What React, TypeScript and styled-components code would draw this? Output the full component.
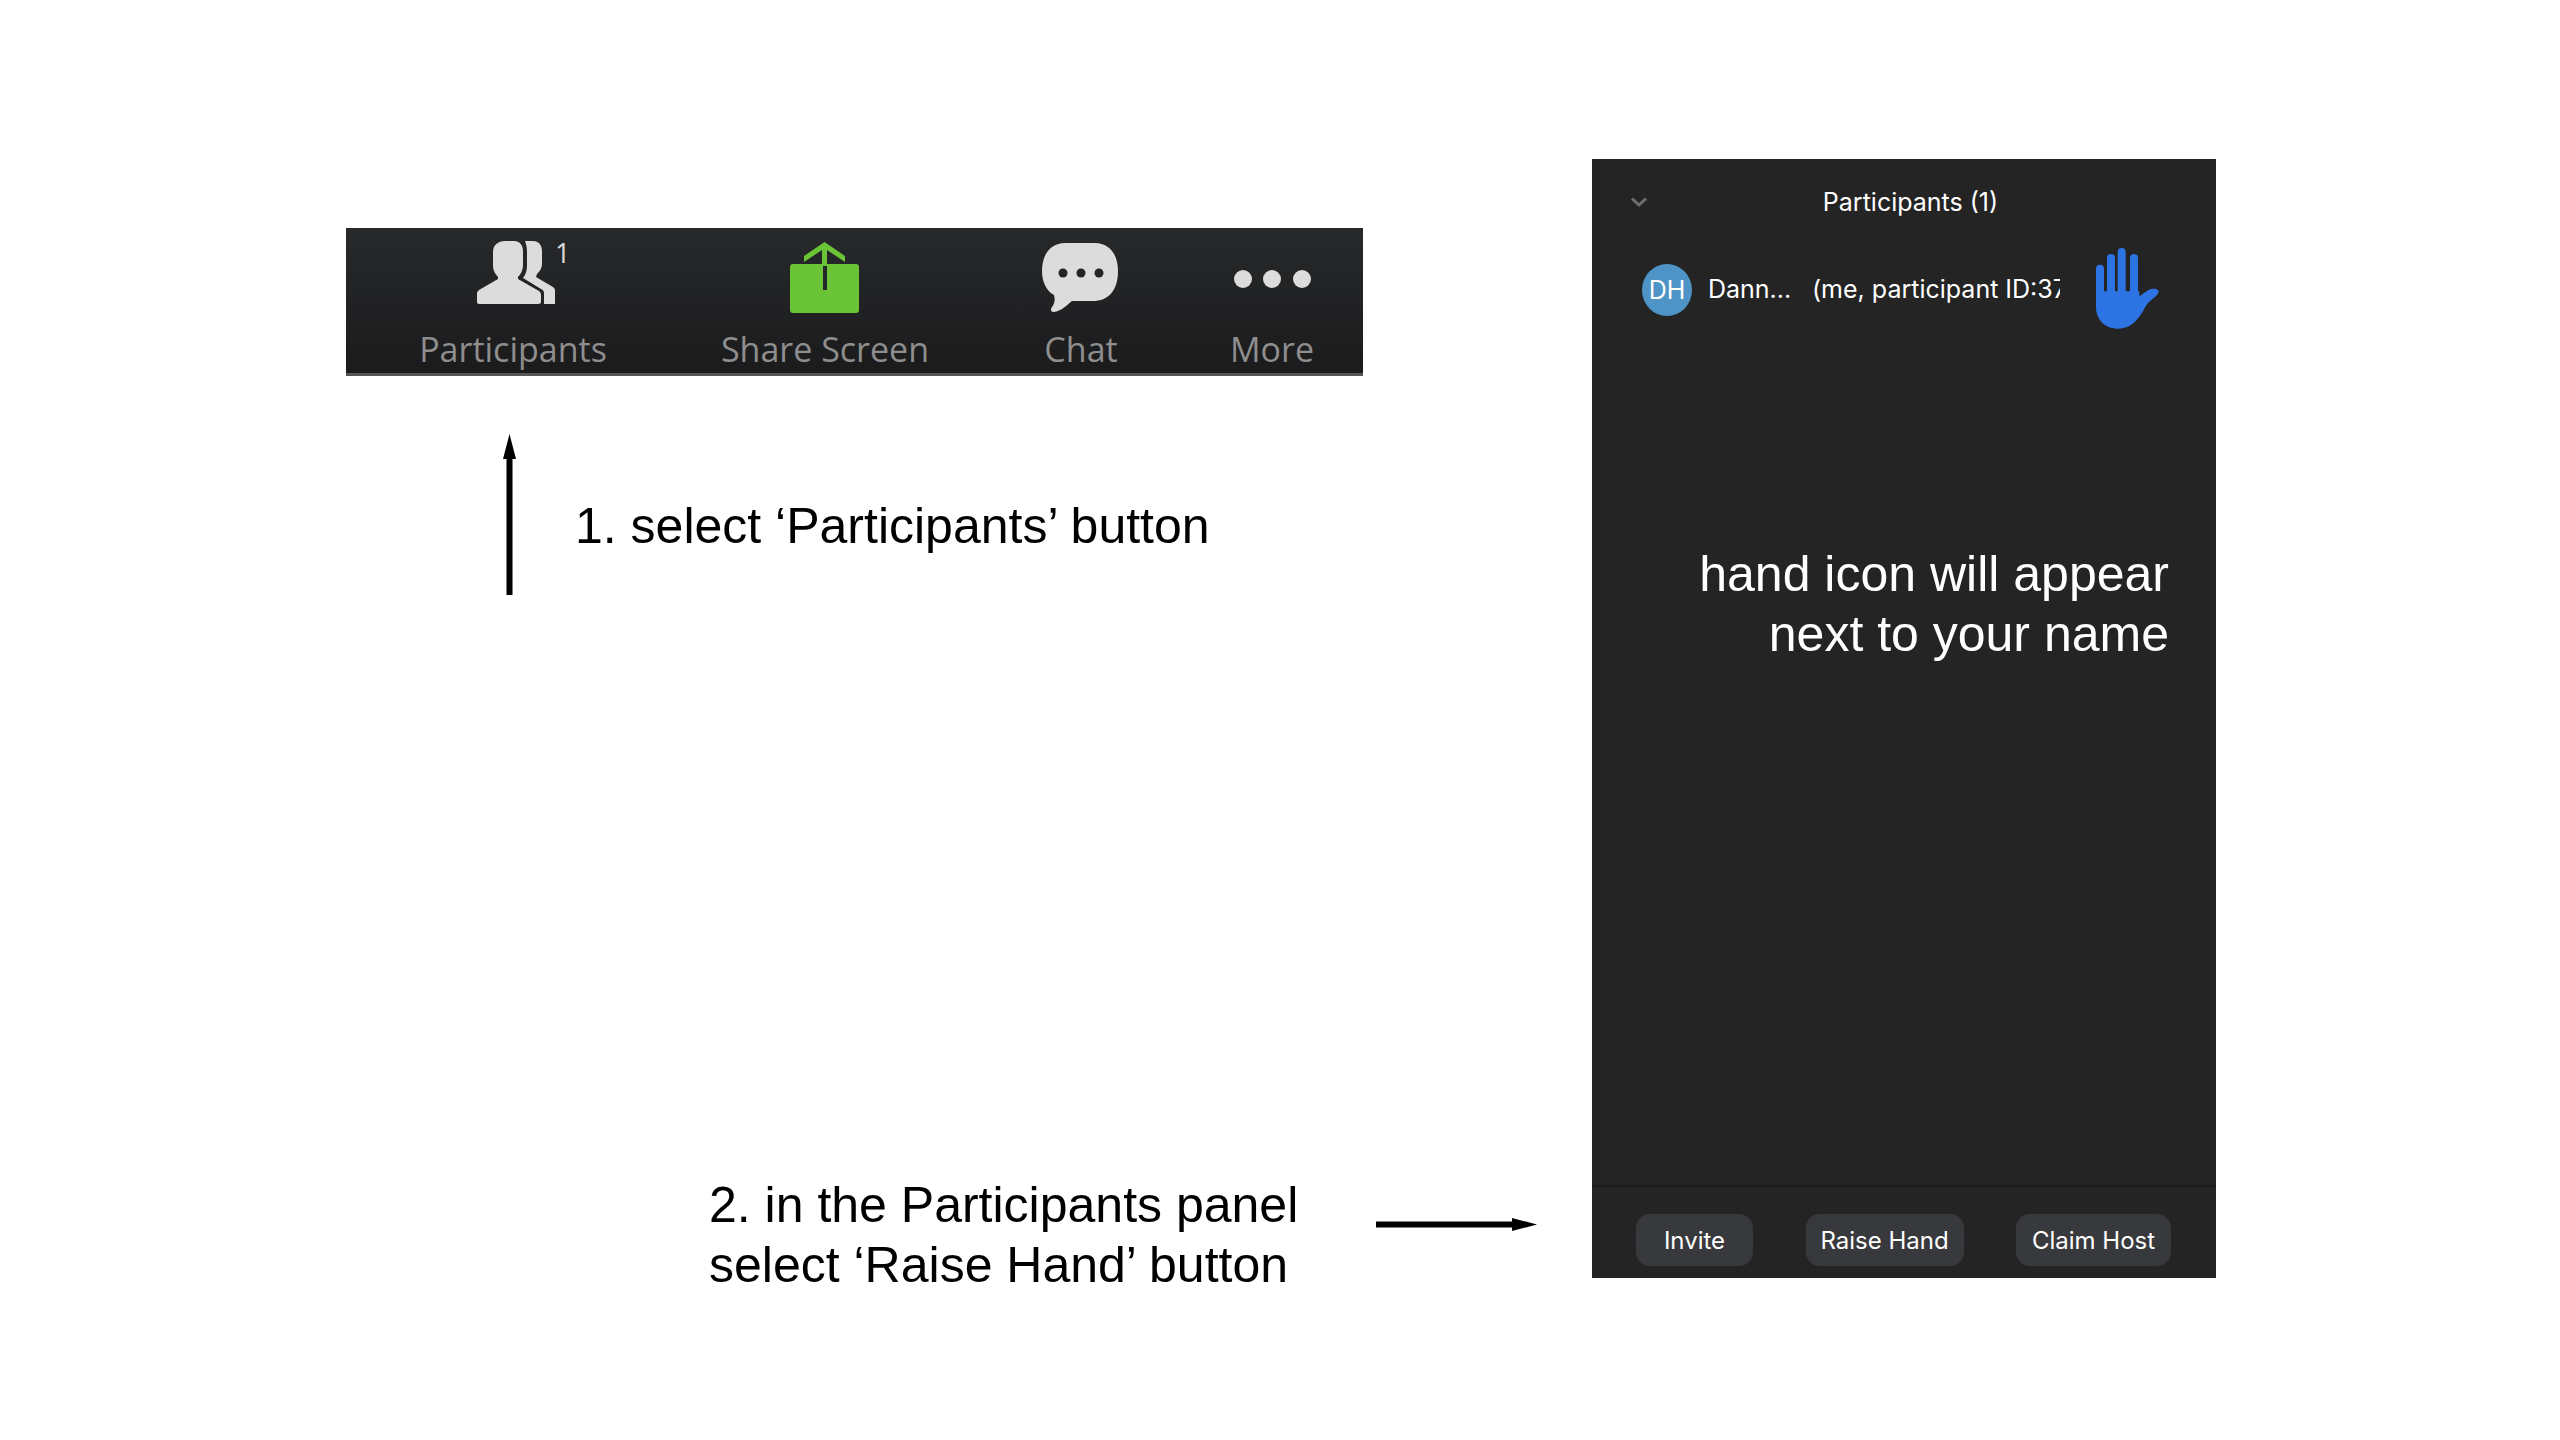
import styled, { createGlobalStyle } from 'styled-components'

const GlobalStyle = createGlobalStyle`
  html,
  body {
    background: #fff;
    margin: 0;
  }
`

const Page = styled.div`
  box-sizing: border-box;
  color: #000;
  display: flex;
  font-family: 'Liberation Sans', Arial, sans-serif;
  height: 1440px;
  overflow: hidden;
  padding: 159px 0 0 346px;
  width: 2560px;
`

const LeftColumn = styled.div`
  align-self: flex-start;
  display: flex;
  flex-direction: column;
  flex-shrink: 0;
  padding-top: 69px;
  width: 1246px;
`

const Toolbar = styled.div`
  background: linear-gradient(#27292b, #1b1b1c);
  border-bottom: 3px solid #55565a;
  box-sizing: border-box;
  display: grid;
  grid-template-columns: 334px 290px 222px 160px;
  height: 148px;
  padding-top: 12px;
  width: 1017px;
`

const ToolItem = styled.div`
  align-items: center;
  display: flex;
  flex-direction: column;
`

const ToolIcon = styled.div`
  height: 76px;
  position: relative;
  width: 100px;

  svg {
    display: block;
  }
`

const Badge = styled.span`
  color: #dcdcdc;
  font-family: 'Open Sans', sans-serif;
  font-size: 27px;
  left: 92px;
  line-height: 1;
  position: absolute;
  top: -1px;
`

const ToolLabel = styled.div`
  color: #8e8e8e;
  font-family: 'Open Sans', sans-serif;
  font-size: 34px;
  line-height: 40px;
  margin-top: 13px;
  white-space: nowrap;
`

const StepOne = styled.div`
  align-items: flex-start;
  column-gap: 59px;
  display: flex;
  margin-top: 58px;
  padding-left: 157px;
`

const StepTwo = styled.div`
  align-items: center;
  display: flex;
  margin-top: 580px;
  padding-left: 363px;
`

const StepText = styled.div<{ $top?: number; $width?: number }>`
  flex-shrink: 0;
  font-size: 50px;
  line-height: 60px;
  padding-top: ${({ $top }) => $top ?? 0}px;
  white-space: nowrap;
  width: ${({ $width }) => ($width ? `${$width}px` : 'auto')};
`

const ArrowSvg = styled.svg<{ $bottom?: number }>`
  display: block;
  flex-shrink: 0;
  margin-bottom: ${({ $bottom }) => $bottom ?? 0}px;
`

const Panel = styled.div`
  background: #242424;
  color: #fff;
  display: flex;
  flex-direction: column;
  flex-shrink: 0;
  font-family: Inter, sans-serif;
  height: 1119px;
  overflow: hidden;
  width: 1624px;
  max-width: 624px;
`

const PanelHeader = styled.div`
  align-items: center;
  display: grid;
  flex-shrink: 0;
  grid-template-columns: 90px 1fr 90px;
  height: 86px;
  padding-left: 0;
`

const Chevron = styled.svg`
  display: block;
  margin-left: 38px;
`

const PanelTitle = styled.div`
  font-size: 25px;
  padding-left: 13px;
  text-align: center;
`

const ParticipantRow = styled.div`
  align-items: center;
  display: flex;
  flex-shrink: 0;
  height: 86px;
  padding-left: 50px;
`

const Avatar = styled.div`
  align-items: center;
  background: #4f94c6;
  border-radius: 50%;
  display: flex;
  flex-shrink: 0;
  font-size: 25px;
  height: 52px;
  justify-content: center;
  margin-top: 4px;
  width: 50px;
`

const Name = styled.div`
  flex-shrink: 0;
  font-size: 25px;
  margin-left: 16px;
  margin-top: 2px;
  width: 104px;
`

const Note = styled.div`
  flex-shrink: 0;
  font-size: 25px;
  margin-top: 2px;
  overflow: hidden;
  white-space: nowrap;
  width: 248px;
`

const Hand = styled.svg`
  display: block;
  flex-shrink: 0;
  margin-left: 34px;
`

const Callout = styled.div`
  align-items: flex-end;
  display: flex;
  flex-direction: column;
  padding: 40px 47px 0 0;
`

const CalloutArrow = styled(ArrowSvg)`
  margin-right: 46px;
`

const CalloutText = styled.div`
  font-family: 'Liberation Sans', Arial, sans-serif;
  font-size: 50px;
  line-height: 60px;
  margin-top: 23px;
  text-align: right;
  white-space: nowrap;
`

const PanelFooter = styled.div`
  border-top: 2px solid #1a1a1a;
  box-sizing: border-box;
  display: flex;
  height: 93px;
  justify-content: space-between;
  margin-top: auto;
  padding: 27px 45px 0 44px;
`

const FooterButton = styled.div<{ $width: number }>`
  align-items: center;
  background: #38393d;
  border-radius: 14px;
  display: flex;
  font-size: 24px;
  height: 52px;
  justify-content: center;
  width: ${({ $width }) => $width}px;
`

const ParticipantsIcon = () => (
  <svg width="100" height="76" viewBox="0 0 100 76">
    <path
      fill="#dcdcdc"
      d="M62 1h8c6 0 9 4 9 11v12c0 4-2 7-5 10l-1 3 17 10c1 1 2 2 2 3v14H81V53c0-2-1-3-3-4L60 38c3-4 4-8 4-13V12c0-5-1-8-2-11z"
    />
    <path
      fill="#dcdcdc"
      d="M42 1h9c6 0 9 4 9 11v13c0 5-2 9-5 12v2l21 12c1 1 2 2 2 4v7c0 1-1 2-3 2H16c-1 0-2-1-2-2v-9c0-1 1-2 2-3l19-11v-2c-3-3-5-7-5-11V12c0-7 5-11 12-11z"
    />
  </svg>
)

const ShareIcon = () => (
  <svg width="100" height="76" viewBox="0 0 100 76">
    <rect x="15" y="24" width="69" height="49" rx="3" fill="#6bc436" />
    <path fill="#6bc436" d="M49.5 2 70 16v6L52 10v16h-5V10L29 22v-6z" />
    <rect x="48" y="26" width="4" height="24" fill="#23282a" />
  </svg>
)

const ChatIcon = () => (
  <svg width="100" height="76" viewBox="0 0 100 76">
    <path
      fill="#dcdcdc"
      d="M34 3h30c14 0 23 11 23 28 0 20-10 30-25 30H41c-6 5-11 10-18 11-3 0-4-2-2-5 3-4 3-8 2-12C15 51 11 41 11 31 11 14 20 3 34 3z"
    />
    <circle cx="32" cy="33" r="4.5" fill="#232426" />
    <circle cx="50" cy="33" r="4.5" fill="#232426" />
    <circle cx="68" cy="33" r="4.5" fill="#232426" />
  </svg>
)

const MoreIcon = () => (
  <svg width="100" height="76" viewBox="0 0 100 76">
    <circle cx="21" cy="39" r="9" fill="#dcdcdc" />
    <circle cx="50" cy="39" r="9" fill="#dcdcdc" />
    <circle cx="80" cy="39" r="9" fill="#dcdcdc" />
  </svg>
)

const UpArrow = ({ color, className }: { color: string; className?: string }) => (
  <ArrowSvg className={className} width="13" height="161" viewBox="0 0 13 161">
    <path fill={color} d="M6.5 0 13 25H9.5v136h-6V25H0z" />
  </ArrowSvg>
)

const tools = [
  { label: 'Participants', icon: <ParticipantsIcon />, badge: '1' },
  { label: 'Share Screen', icon: <ShareIcon /> },
  { label: 'Chat', icon: <ChatIcon /> },
  { label: 'More', icon: <MoreIcon /> },
]

const App = () => (
  <>
    <GlobalStyle />
    <Page>
      <LeftColumn>
        <Toolbar>
          {tools.map(({ label, icon, badge }) => (
            <ToolItem key={label}>
              <ToolIcon>
                {icon}
                {badge && <Badge>{badge}</Badge>}
              </ToolIcon>
              <ToolLabel>{label}</ToolLabel>
            </ToolItem>
          ))}
        </Toolbar>
        <StepOne>
          <UpArrow color="#000" />
          <StepText $top={62}>1. select ‘Participants’ button</StepText>
        </StepOne>
        <StepTwo>
          <StepText $width={667}>
            2. in the Participants panel
            <br />
            select ‘Raise Hand’ button
          </StepText>
          <ArrowSvg $bottom={22} width="161" height="13" viewBox="0 0 161 13">
            <path fill="#000" d="M161 6.5 136 13V9.5H0v-6h136V0z" />
          </ArrowSvg>
        </StepTwo>
      </LeftColumn>
      <Panel>
        <PanelHeader>
          <Chevron width="18" height="12" viewBox="0 0 18 12">
            <path d="M2 2.5 9 9l7-6.500" fill="none" stroke="#6f6f6f" strokeWidth="3" />
          </Chevron>
          <PanelTitle>Participants (1)</PanelTitle>
        </PanelHeader>
        <ParticipantRow>
          <Avatar>DH</Avatar>
          <Name>Dann...</Name>
          <Note>(me, participant ID:37</Note>
          <Hand width="68" height="84" viewBox="72 42 204 252">
            <g stroke="#2c74e4" strokeWidth="24" strokeLinecap="round">
              <path d="M90 110v90" />
              <path d="M123 78v110" />
              <path d="M155 60v120" />
              <path d="M192 78v112" />
            </g>
            <path
              fill="#2c74e4"
              d="M78 178h130v14c12-6 22-18 36-21 14-3 26 2 21 12-8 14-28 22-38 40-18 34-40 67-82 67-40 0-67-27-67-66z"
            />
          </Hand>
        </ParticipantRow>
        <Callout>
          <CalloutArrow color="#fff" />
          <CalloutText>
            hand icon will appear
            <br />
            next to your name
          </CalloutText>
        </Callout>
        <PanelFooter>
          <FooterButton $width={117}>Invite</FooterButton>
          <FooterButton $width={158}>Raise Hand</FooterButton>
          <FooterButton $width={155}>Claim Host</FooterButton>
        </PanelFooter>
      </Panel>
    </Page>
  </>
)

export default App
